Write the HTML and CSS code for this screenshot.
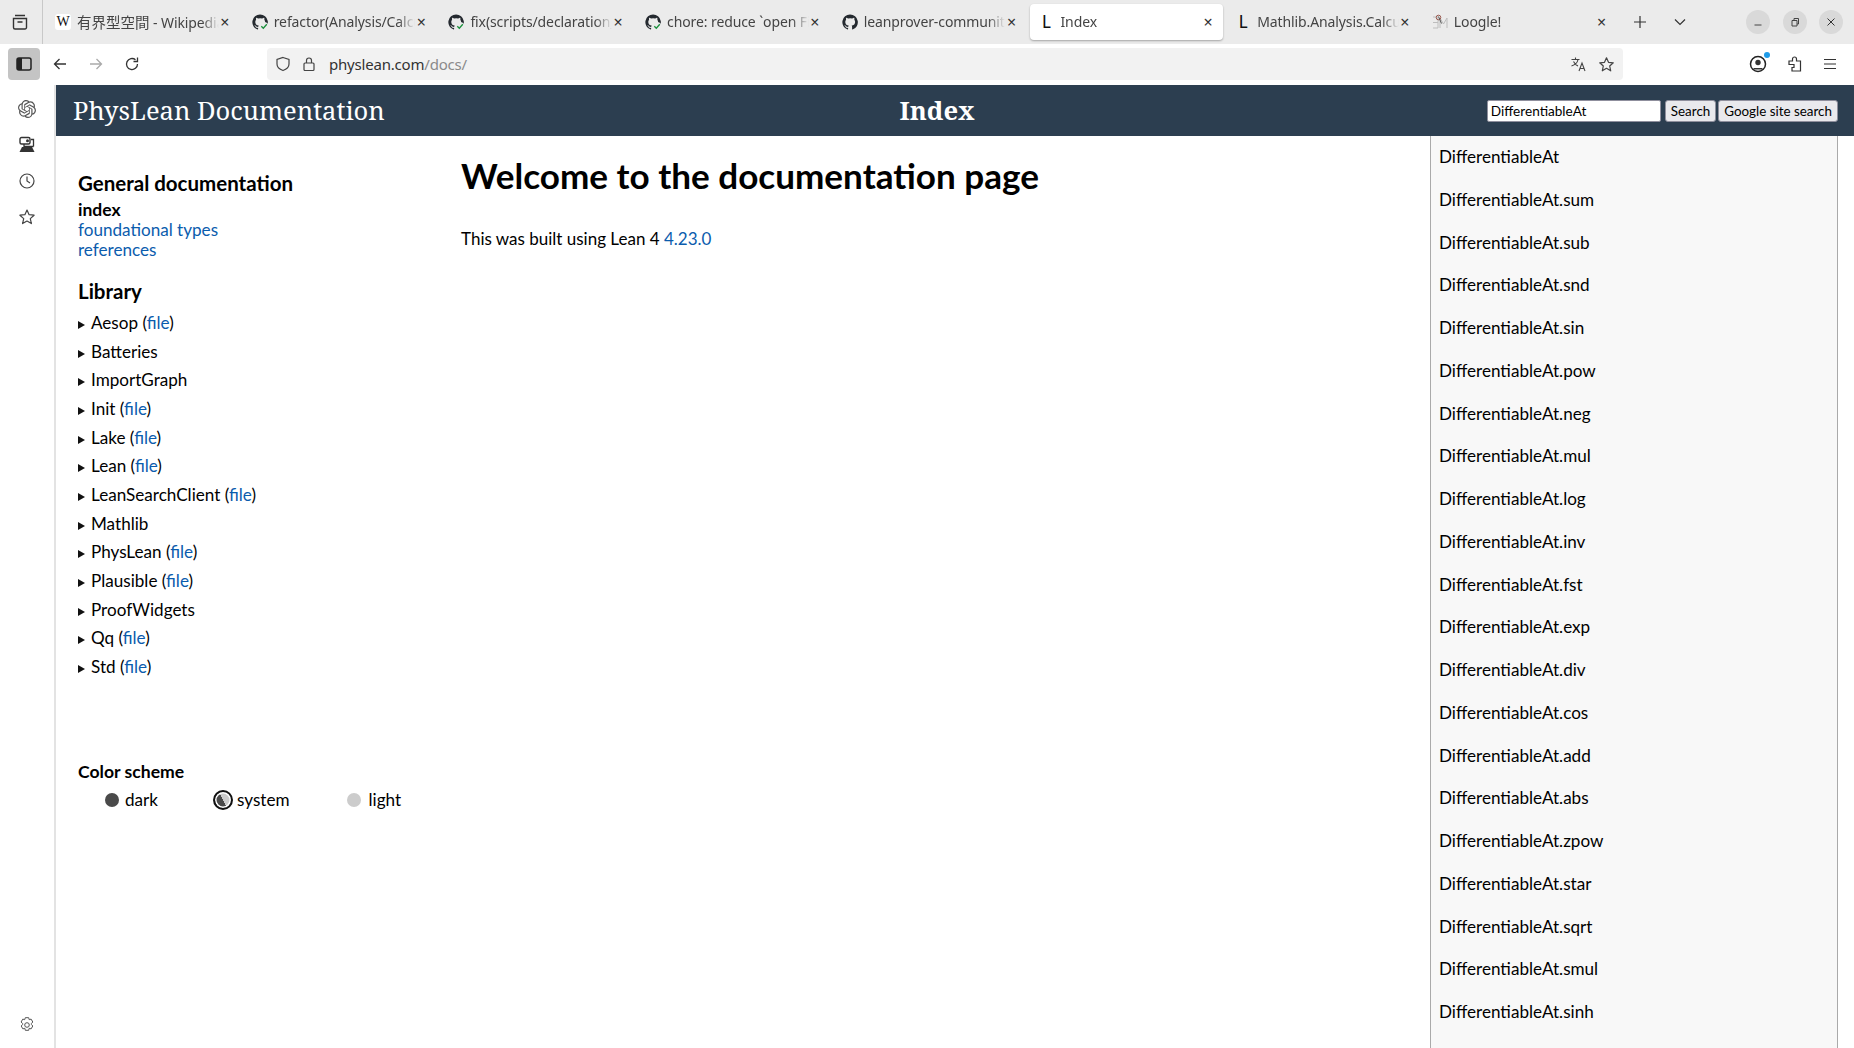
FILE: index.html
```html
<!DOCTYPE html>
<html lang="en">
<head>
<meta charset="utf-8">
<title>Index</title>
<link rel="stylesheet" href="styles.css">
</head>
<body>
<div class="tabbar">
  <div class="tabbar-start">
    <svg class="ic" width="18" height="18" viewBox="0 0 18 18"><path d="M4 2.500h10M2.500 5.500h13v9a1.500 1.500 0 0 1-1.500 1.500H4a1.500 1.500 0 0 1-1.500-1.500zM6.500 9h5" fill="none" stroke="#333" stroke-width="1.400"/></svg>
  </div>
  <div class="tabs">
    <div class="tab"><span class="fav fav-w">W</span><span class="tab-title"><span class="cjk">有界型空間</span> - Wikipedia</span><span class="tab-x">×</span></div>
    <div class="tab"><svg class="fav" viewBox="0 0 16 16"><use href="#gh-check"/></svg><span class="tab-title">refactor(Analysis/Calculus)</span><span class="tab-x">×</span></div>
    <div class="tab"><svg class="fav" viewBox="0 0 16 16"><use href="#gh-check"/></svg><span class="tab-title">fix(scripts/declaration_range)</span><span class="tab-x">×</span></div>
    <div class="tab"><svg class="fav" viewBox="0 0 16 16"><use href="#gh-check"/></svg><span class="tab-title">chore: reduce `open Filter`</span><span class="tab-x">×</span></div>
    <div class="tab"><svg class="fav" viewBox="0 0 16 16"><use href="#gh"/></svg><span class="tab-title">leanprover-community/mathlib4</span><span class="tab-x">×</span></div>
    <div class="tab tab-active"><span class="fav fav-l">L</span><span class="tab-title">Index</span><span class="tab-x">×</span></div>
    <div class="tab"><span class="fav fav-l">L</span><span class="tab-title">Mathlib.Analysis.Calculus</span><span class="tab-x">×</span></div>
    <div class="tab"><svg class="fav" viewBox="0 0 16 16"><path d="M1 3h5v11H1M1 8.500h5M8 14V4l3.500 6L15 4v10" fill="none" stroke="#bdbdbd" stroke-width="1"/><circle cx="6.500" cy="3.500" r="2.300" fill="none" stroke="#9a5a50" stroke-width="1"/><path d="M6.500 2.500l3 7" stroke="#555" stroke-width="1"/></svg><span class="tab-title">Loogle!</span><span class="tab-x">×</span></div>
  </div>
  <div class="tab-tools">
    <svg class="ic" width="16" height="16" viewBox="0 0 16 16"><path d="M8 2v12M2 8h12" stroke="#333" stroke-width="1.200"/></svg>
    <svg class="ic" width="16" height="16" viewBox="0 0 16 16"><path d="M3 5.500l5 5 5-5" fill="none" stroke="#333" stroke-width="1.200"/></svg>
  </div>
  <div class="winctl">
    <span class="winbtn"><svg width="12" height="12" viewBox="0 0 12 12"><path d="M2.500 9h7" stroke="#444" stroke-width="1"/></svg></span>
    <span class="winbtn"><svg width="12" height="12" viewBox="0 0 12 12"><path d="M3 4.500h5V10H3zM5 4.500V2.500h4.500V8H8" fill="none" stroke="#444" stroke-width="1"/></svg></span>
    <span class="winbtn"><svg width="12" height="12" viewBox="0 0 12 12"><path d="M2.500 2.500l7 7M9.500 2.500l-7 7" stroke="#333" stroke-width="1"/></svg></span>
  </div>
</div>

<div class="toolbar">
  <span class="side-toggle"><svg width="16" height="14" viewBox="0 0 16 14"><rect x="1" y="1" width="14" height="12" rx="2" fill="none" stroke="#222" stroke-width="1.500"/><rect x="1" y="1" width="5" height="12" fill="#222"/></svg></span>
  <span class="nav-btn nav-first"><svg width="16" height="16" viewBox="0 0 16 16"><path d="M14 8H2.500M7.500 3l-5 5 5 5" fill="none" stroke="#333" stroke-width="1.300"/></svg></span>
  <span class="nav-btn"><svg width="16" height="16" viewBox="0 0 16 16"><path d="M2 8h11.500M8.500 3l5 5-5 5" fill="none" stroke="#aaa" stroke-width="1.300"/></svg></span>
  <span class="nav-btn"><svg width="16" height="16" viewBox="0 0 16 16"><path d="M13.500 8A5.500 5.500 0 1 1 11.500 3.800M13.500 1.500v4h-4" fill="none" stroke="#333" stroke-width="1.300"/></svg></span>
  <div class="urlbar">
    <svg class="ic" width="16" height="16" viewBox="0 0 16 16"><path d="M8 1.500l6 2v4.500c0 3.500-3 5.500-6 6.500-3-1-6-3-6-6.500V3.500z" fill="none" stroke="#444" stroke-width="1.200"/></svg>
    <svg class="ic" width="14" height="16" viewBox="0 0 14 16"><rect x="2" y="7" width="10" height="7.500" rx="1" fill="none" stroke="#444" stroke-width="1.200"/><path d="M4.500 7V4.500a2.500 2.500 0 0 1 5 0V7" fill="none" stroke="#444" stroke-width="1.200"/></svg>
    <span class="url">physlean.com<span class="url-path">/docs/</span></span>
    <span class="url-space"></span>
    <svg class="ic" width="17" height="17" viewBox="0 0 17 17"><path d="M1.500 3.500h8M5.500 1.500v2M8 3.500c-.5 3-3 5.500-6.500 6.500M3.500 5.500c1 2 2.500 3.500 4.500 4.500M9 15l3-8 3 8M10 12.500h4" fill="none" stroke="#444" stroke-width="1.100"/></svg>
    <svg class="ic" width="17" height="17" viewBox="0 0 17 17"><path d="M8.500 1.800l2 4.500 4.800.5-3.600 3.200 1 4.800-4.200-2.500-4.200 2.500 1-4.800L1.700 6.800l4.800-.5z" fill="none" stroke="#444" stroke-width="1.200" stroke-linejoin="round"/></svg>
  </div>
  <div class="tool-end">
    <span class="account"><svg width="18" height="18" viewBox="0 0 18 18"><circle cx="9" cy="9" r="7.500" fill="none" stroke="#222" stroke-width="1.500"/><circle cx="9" cy="7.500" r="2.700" fill="#333"/><path d="M4.500 13h9v1.500h-9z" fill="#333"/></svg><i class="dot"></i></span>
    <svg class="ic" width="16" height="18" viewBox="0 0 16 18"><path d="M2 6h3.500V4a2 2 0 0 1 4 0v2H13.500v10H5v-3.500H7v-3H2z" fill="none" stroke="#333" stroke-width="1.200"/></svg>
    <svg class="ic" width="16" height="16" viewBox="0 0 16 16"><path d="M2 3.500h12M2 8h12M2 12.500h12" stroke="#333" stroke-width="1.200"/></svg>
  </div>
</div>

<div class="window">
  <aside class="sidebar">
    <svg class="side-ic" width="18" height="18" viewBox="0 0 24 24"><path fill="#555" d="M22.2819 9.8211a5.9847 5.9847 0 0 0-.5157-4.9108 6.0462 6.0462 0 0 0-6.5098-2.9A6.0651 6.0651 0 0 0 4.9807 4.1818a5.9847 5.9847 0 0 0-3.9977 2.9 6.0462 6.0462 0 0 0 .7427 7.0966 5.98 5.98 0 0 0 .511 4.9107 6.051 6.051 0 0 0 6.5146 2.9001A5.9847 5.9847 0 0 0 13.2599 24a6.0557 6.0557 0 0 0 5.7718-4.2058 5.9894 5.9894 0 0 0 3.9977-2.9001 6.0557 6.0557 0 0 0-.7475-7.0729zm-9.022 12.6081a4.4755 4.4755 0 0 1-2.8764-1.0408l.1419-.0804 4.7783-2.7582a.7948.7948 0 0 0 .3927-.6813v-6.7369l2.02 1.1686a.071.071 0 0 1 .038.052v5.5826a4.504 4.504 0 0 1-4.4945 4.4944zm-9.6607-4.1254a4.4708 4.4708 0 0 1-.5346-3.0137l.142.0852 4.783 2.7582a.7712.7712 0 0 0 .7806 0l5.8428-3.3685v2.3324a.0804.0804 0 0 1-.0332.0615L9.74 19.9502a4.4992 4.4992 0 0 1-6.1408-1.6464zM2.3408 7.8956a4.485 4.485 0 0 1 2.3655-1.9728V11.6a.7664.7664 0 0 0 .3879.6765l5.8144 3.3543-2.0201 1.1685a.0757.0757 0 0 1-.071 0l-4.8303-2.7865A4.504 4.504 0 0 1 2.3408 7.872zm16.5963 3.8558L13.1038 8.364 15.1192 7.2a.0757.0757 0 0 1 .071 0l4.8303 2.7913a4.4944 4.4944 0 0 1-.6765 8.1042v-5.6772a.79.79 0 0 0-.407-.667zm2.0107-3.0231l-.142-.0852-4.7735-2.7818a.7759.7759 0 0 0-.7854 0L9.409 9.2297V6.8974a.0662.0662 0 0 1 .0284-.0615l4.8303-2.7866a4.4992 4.4992 0 0 1 6.6802 4.66zM8.3065 12.863l-2.02-1.1638a.0804.0804 0 0 1-.038-.0567V6.0742a4.4992 4.4992 0 0 1 7.3757-3.4537l-.142.0805L8.704 5.459a.7948.7948 0 0 0-.3927.6813zm1.0976-2.3654l2.602-1.4998 2.6069 1.4998v2.9994l-2.5974 1.4997-2.6067-1.4997Z"/></svg>
    <svg class="side-ic" width="18" height="18" viewBox="0 0 18 18"><rect x="2" y="1.500" width="10" height="6.500" rx="1.500" fill="none" stroke="#333" stroke-width="1.400"/><circle cx="9.500" cy="4.700" r="1.500" fill="#333"/><path d="M13 3.500h2.500v7M6 8v2.500h9.500" fill="none" stroke="#333" stroke-width="1.300"/><path d="M4 11h10l2.500 5h-15z" fill="#333"/></svg>
    <svg class="side-ic" width="18" height="18" viewBox="0 0 18 18"><circle cx="9" cy="9" r="7" fill="none" stroke="#444" stroke-width="1.200"/><path d="M9 4.500V9l3 2" fill="none" stroke="#444" stroke-width="1.200"/></svg>
    <svg class="side-ic" width="18" height="18" viewBox="0 0 18 18"><path d="M9 2l2.100 4.700 5 .5-3.800 3.400 1.100 5L9 13l-4.400 2.600 1.100-5L1.900 7.200l5-.5z" fill="none" stroke="#444" stroke-width="1.200" stroke-linejoin="round"/></svg>
    <span class="side-space"></span>
    <svg class="side-ic" width="18" height="18" viewBox="0 0 18 18"><circle cx="9" cy="9" r="2.300" fill="none" stroke="#555" stroke-width="1"/><path d="M7.300 1.700h3.400l.5 2 1.900-.6 1.700 2.900-1.400 1.500.0 1 1.400 1.500-1.700 2.900-1.900-.6-.5 2h-3.400l-.5-2-1.900.6-1.700-2.900 1.400-1.500v-1L3.100 6l1.700-2.900 1.900.6z" fill="none" stroke="#555" stroke-width="1" stroke-linejoin="round"/></svg>
  </aside>

  <div class="page">
    <header class="doc-header">
      <div class="doc-title">PhysLean Documentation</div>
      <div class="doc-index">Index</div>
      <form class="search">
        <input class="search-input" type="text" value="DifferentiableAt">
        <button class="search-btn" type="button">Search</button>
        <button class="search-btn search-google" type="button">Google site search</button>
      </form>
    </header>
    <div class="doc-body">
      <nav class="doc-nav">
        <h3 class="nav-h">General documentation</h3>
        <div class="nav-cur">index</div>
        <div><a>foundational types</a></div>
        <div><a>references</a></div>
        <h3 class="nav-h nav-h-lib">Library</h3>
        <ul class="lib">
          <li>Aesop (<a>file</a>)</li>
          <li>Batteries</li>
          <li>ImportGraph</li>
          <li>Init (<a>file</a>)</li>
          <li>Lake (<a>file</a>)</li>
          <li>Lean (<a>file</a>)</li>
          <li>LeanSearchClient (<a>file</a>)</li>
          <li>Mathlib</li>
          <li>PhysLean (<a>file</a>)</li>
          <li>Plausible (<a>file</a>)</li>
          <li>ProofWidgets</li>
          <li>Qq (<a>file</a>)</li>
          <li>Std (<a>file</a>)</li>
        </ul>
        <div class="scheme-h">Color scheme</div>
        <div class="scheme">
          <span class="opt opt-dark"><i class="swatch sw-dark"></i>dark</span>
          <span class="opt opt-system"><i class="sw-system"></i>system</span>
          <span class="opt opt-light"><i class="swatch sw-light"></i>light</span>
        </div>
      </nav>
      <main class="doc-main">
        <h1 class="welcome">Welcome to the documentation page</h1>
        <p class="built">This was built using Lean 4 <a>4.23.0</a></p>
      </main>
    </div>
    <div class="ac">
      <div class="ac-row">DifferentiableAt</div>
      <div class="ac-row">DifferentiableAt.sum</div>
      <div class="ac-row">DifferentiableAt.sub</div>
      <div class="ac-row">DifferentiableAt.snd</div>
      <div class="ac-row">DifferentiableAt.sin</div>
      <div class="ac-row">DifferentiableAt.pow</div>
      <div class="ac-row">DifferentiableAt.neg</div>
      <div class="ac-row">DifferentiableAt.mul</div>
      <div class="ac-row">DifferentiableAt.log</div>
      <div class="ac-row">DifferentiableAt.inv</div>
      <div class="ac-row">DifferentiableAt.fst</div>
      <div class="ac-row">DifferentiableAt.exp</div>
      <div class="ac-row">DifferentiableAt.div</div>
      <div class="ac-row">DifferentiableAt.cos</div>
      <div class="ac-row">DifferentiableAt.add</div>
      <div class="ac-row">DifferentiableAt.abs</div>
      <div class="ac-row">DifferentiableAt.zpow</div>
      <div class="ac-row">DifferentiableAt.star</div>
      <div class="ac-row">DifferentiableAt.sqrt</div>
      <div class="ac-row">DifferentiableAt.smul</div>
      <div class="ac-row">DifferentiableAt.sinh</div>
    </div>
  </div>
</div>

<svg class="defs" width="0" height="0">
  <defs>
    <path id="gh" d="M8 .5a7.700 7.700 0 0 0-2.400 15c.4.100.5-.2.500-.4v-1.300c-2.100.5-2.600-1-2.600-1-.3-.9-.8-1.100-.8-1.100-.7-.5.100-.5.100-.5.800.100 1.200.8 1.200.8.700 1.200 1.800.9 2.300.7.100-.5.300-.9.500-1.100-1.700-.2-3.500-.9-3.500-3.800 0-.8.300-1.500.8-2-.1-.2-.3-1 .100-2 0 0 .6-.2 2.100.8a7.300 7.300 0 0 1 3.800 0c1.500-1 2.100-.8 2.100-.8.400 1 .2 1.800.100 2 .5.500.8 1.200.8 2 0 2.900-1.800 3.600-3.500 3.800.3.200.5.700.5 1.400v2.100c0 .2.100.5.500.4A7.700 7.700 0 0 0 8 .5z" fill="#24292f"/>
    <g id="gh-check">
      <use href="#gh"/>
      <circle cx="12.300" cy="12.300" r="4.300" fill="#ebebeb"/>
      <path d="M9.300 12.300l2 2 3.500-4" fill="none" stroke="#1a8f3c" stroke-width="1.300"/>
    </g>
  </defs>
</svg>
</body>
</html>
```

FILE: styles.css
```css
* { box-sizing: border-box; }
html, body { margin: 0; height: 100%; }
body {
  display: flex;
  flex-direction: column;
  width: 1854px;
  height: 1048px;
  overflow: hidden;
  background: #fff;
  font-family: "Lato", "Liberation Sans", sans-serif;
  color: #000;
}
.ic { display: block; flex: none; }
.defs { position: absolute; }

/* tab strip */
.tabbar {
  display: flex;
  align-items: center;
  height: 44px;
  background: #ebebeb;
  flex: none;
  font-family: "Noto Sans", "Noto Sans CJK JP", sans-serif;
}
.tabbar-start {
  width: 43px;
  height: 44px;
  display: flex;
  align-items: center;
  justify-content: center;
  border-right: 1px solid #c8c8c8;
  padding-right: 2px;
  flex: none;
}
.tabs {
  display: flex;
  width: 1573px;
  padding-left: 4px;
  flex: none;
}
.tab {
  display: flex;
  align-items: center;
  width: 192.700px;
  height: 36px;
  margin-right: 4px;
  padding: 0 9px 0 8px;
  border-radius: 4px;
  font-size: 14px;
  letter-spacing: -0.1px;
  color: #444;
  flex: none;
}
.tab-active {
  background: #fff;
  box-shadow: 0 1px 2px rgba(0, 0, 0, 0.3);
}
.fav { width: 16px; height: 16px; flex: none; margin-right: 6px; display: block; }
.fav-w {
  background: #fff;
  border-radius: 3px;
  font: 14px/16px "Liberation Serif", serif;
  color: #111;
  text-align: center;
}
.fav-l {
  font: 17px/16px "Lato", sans-serif;
  color: #111;
  text-align: center;
}
.tab-title {
  flex: 1;
  min-width: 0;
  margin-bottom: 2px;
  overflow: hidden;
  white-space: nowrap;
  -webkit-mask-image: linear-gradient(to right, #000 88%, transparent 100%);
  mask-image: linear-gradient(to right, #000 88%, transparent 100%);
}
.cjk { font-size: 14.500px; letter-spacing: 0; }
.tab-x { flex: none; width: 12px; text-align: center; font-size: 16px; line-height: 16px; color: #333; }
.tab-tools { display: flex; gap: 24px; width: 70px; margin-left: 16px; flex: none; }
.winctl { display: flex; gap: 12.600px; margin-left: 44px; flex: none; }
.winbtn {
  width: 24px;
  height: 24px;
  border-radius: 50%;
  background: #d9d9d9;
  display: flex;
  align-items: center;
  justify-content: center;
}

/* toolbar */
.toolbar {
  display: flex;
  align-items: center;
  height: 41px;
  flex: none;
  padding: 0 0 1px 8px;
  background: #fff;
}
.side-toggle {
  width: 32px;
  height: 32px;
  border-radius: 4px;
  background: #c4c4c4;
  display: flex;
  align-items: center;
  justify-content: center;
  flex: none;
}
.nav-btn { width: 36px; height: 32px; display: flex; align-items: center; justify-content: center; flex: none; }
.nav-first { margin-left: 2px; }
.urlbar {
  display: flex;
  align-items: center;
  width: 1356px;
  height: 32px;
  margin-left: 117px;
  padding: 0 8px 0 8px;
  background: #f2f2f2;
  border-radius: 4px;
  flex: none;
}
.urlbar .ic + .ic { margin-left: 11px; }
.url {
  margin: 0 0 1px 13px;
  font: 15px "Noto Sans", sans-serif;
  letter-spacing: -0.2px;
  color: #333;
}
.url-path { color: #8a8a8a; }
.url-space { flex: 1; }
.tool-end { display: flex; align-items: center; gap: 19px; margin-left: 126px; flex: none; }
.account { position: relative; display: block; height: 18px; margin-right: 1px; }
.dot {
  position: absolute;
  top: -3px;
  right: -3px;
  width: 6px;
  height: 6px;
  border-radius: 50%;
  background: #1e9be8;
}

/* window body */
.window { display: flex; flex: 1; min-height: 0; }
.sidebar {
  width: 56px;
  flex: none;
  display: flex;
  flex-direction: column;
  align-items: center;
  gap: 18.100px;
  padding: 15px 0 14px;
  border-right: 2px solid #e3e3e3;
}
.side-ic { display: block; flex: none; }
.side-space { flex: 1; }

.page { position: relative; flex: 1; min-width: 0; }
.doc-header {
  position: relative;
  display: flex;
  align-items: center;
  height: 51px;
  padding: 0 16px 0 17px;
  background: #2c3e50;
  color: #fff;
}
.doc-title { font: 25.500px "Noto Serif", "DejaVu Serif", "Liberation Serif", serif; margin-bottom: 2px; }
.doc-index {
  position: absolute;
  left: 881px;
  width: 0;
  display: flex;
  justify-content: center;
  font: bold 25.600px "Noto Serif", "DejaVu Serif", "Liberation Serif", serif;
}
.search { display: flex; align-items: center; margin-left: auto; }
.search-input {
  width: 174px;
  height: 22px;
  padding: 0 3px;
  margin-right: 4px;
  border: 1px solid #8f8f9d;
  border-radius: 2px;
  background: #fff;
  font: 13.600px "Lato", sans-serif;
  color: #000;
}
.search-btn {
  height: 22px;
  padding: 0 5px;
  margin-right: 2px;
  border: 1px solid #8f8f9d;
  border-radius: 3px;
  background: #e9e9ed;
  font: 13.400px "Lato", sans-serif;
  color: #000;
}
.search-google { margin-right: 0; }

.doc-body { display: flex; }
.doc-nav { width: 405px; flex: none; padding: 34px 0 0 22px; font-size: 17.100px; line-height: 20px; }
.doc-nav a, .doc-main a { color: #0b5cad; }
.nav-h { margin: 0 0 4px; font-size: 20.500px; font-weight: 700; line-height: 26px; }
.nav-cur { font-weight: 700; font-size: 17.500px; }
.nav-h-lib { margin: 18px 0 0; }
.lib { list-style: none; margin: 5px 0 0; padding: 0; }
.lib li {
  position: relative;
  height: 28.670px;
  line-height: 28.670px;
  padding-left: 13px;
}
.lib li:before {
  content: "";
  position: absolute;
  left: 0;
  top: 12px;
  border-left: 7px solid #111;
  border-top: 4px solid transparent;
  border-bottom: 4px solid transparent;
}
.scheme-h { margin-top: 80px; font-weight: 700; font-size: 17.600px; }
.scheme { display: flex; margin-top: 6px; padding-left: 27px; }
.opt { display: flex; align-items: center; height: 24px; }
.swatch { width: 14px; height: 14px; border-radius: 50%; margin-right: 6px; }
.sw-dark { background: #4a4a4a; }
.sw-light { background: #ccc; margin-right: 8px; }
.sw-system {
  width: 20px;
  height: 20px;
  margin-right: 4px;
  border: 2px solid #111;
  border-radius: 50%;
  background: linear-gradient(65deg, #4a4a4a 50%, #ccc 50%);
  box-shadow: inset 0 0 0 1.500px #fff;
}
.opt-dark { width: 108px; }
.opt-system { width: 133.500px; }
.doc-main { flex: 1; padding-top: 14px; }
.welcome { margin: 0; font-size: 35.100px; font-weight: 700; line-height: 50px; }
.built { margin: 27px 0 0; font-size: 17px; line-height: 24px; }

/* search suggestions */
.ac {
  position: absolute;
  top: 51px;
  left: 1374px;
  width: 408px;
  height: 912px;
  background: #f8f8f8;
  border-left: 1px solid #aaa;
  border-right: 1px solid #aaa;
  font-size: 17.100px;
}
.ac-row { height: 42.760px; line-height: 42px; padding-left: 8px; white-space: nowrap; }
```
